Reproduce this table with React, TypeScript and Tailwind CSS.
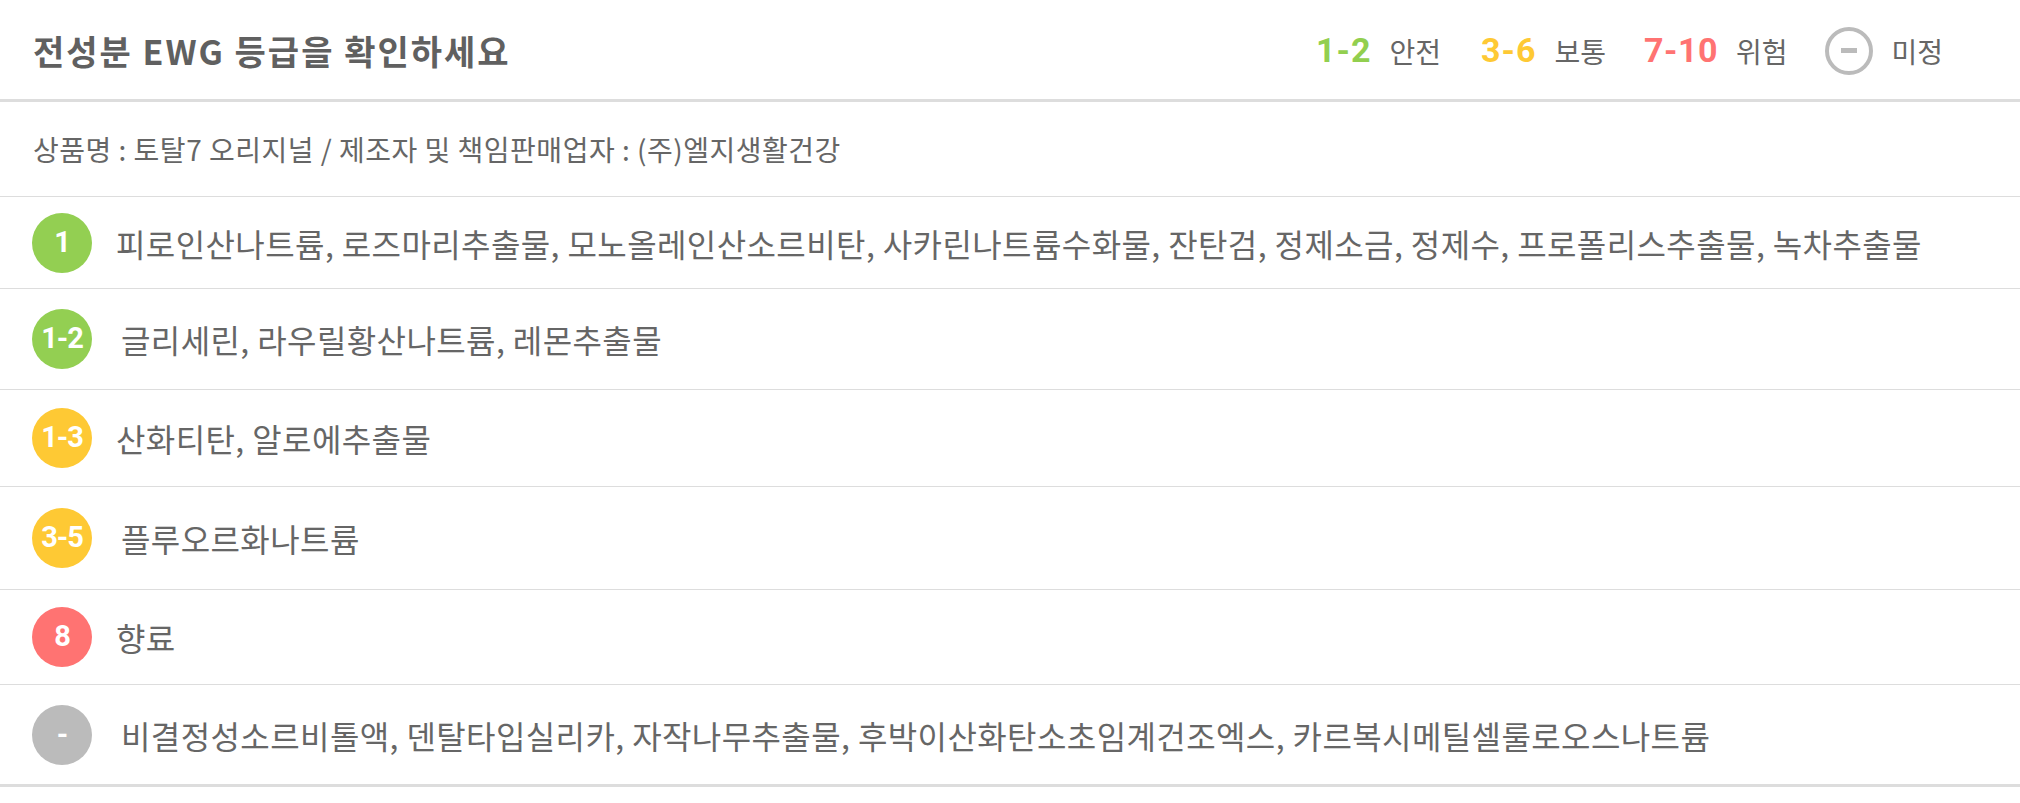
const KR = "font-['Noto_Sans_CJK_KR',sans-serif]";
const NUM = "font-['Roboto','Noto_Sans_CJK_KR',sans-serif]";

type Row = {
  grade: string;
  color: string;
  text: string;
  height: string;
  indent: string;
  last?: boolean;
};

const rows: Row[] = [
  {
    grade: '1',
    color: 'bg-[#93cf52]',
    text: '피로인산나트륨, 로즈마리추출물, 모노올레인산소르비탄, 사카린나트륨수화물, 잔탄검, 정제소금, 정제수, 프로폴리스추출물, 녹차추출물',
    height: 'h-[92px]',
    indent: 'ml-[24px]',
  },
  {
    grade: '1-2',
    color: 'bg-[#93cf52]',
    text: '글리세린, 라우릴황산나트륨, 레몬추출물',
    height: 'h-[101px]',
    indent: 'ml-[29px]',
  },
  {
    grade: '1-3',
    color: 'bg-[#fec934]',
    text: '산화티탄, 알로에추출물',
    height: 'h-[97px]',
    indent: 'ml-[24px]',
  },
  {
    grade: '3-5',
    color: 'bg-[#fec934]',
    text: '플루오르화나트륨',
    height: 'h-[103px]',
    indent: 'ml-[29px]',
  },
  {
    grade: '8',
    color: 'bg-[#ff7372]',
    text: '향료',
    height: 'h-[95px]',
    indent: 'ml-[24px]',
  },
  {
    grade: '-',
    color: 'bg-[#bbbbbb]',
    text: '비결정성소르비톨액, 덴탈타입실리카, 자작나무추출물, 후박이산화탄소초임계건조엑스, 카르복시메틸셀룰로오스나트륨',
    height: 'h-[102px]',
    indent: 'ml-[29px]',
    last: true,
  },
];

function GradeBadge({ grade, color }: { grade: string; color: string }) {
  return (
    <div
      className={`flex h-[60px] w-[60px] shrink-0 items-center justify-center rounded-full ${color} ${NUM} text-[29px] font-bold tracking-[-1px] text-white`}
    >
      {grade}
    </div>
  );
}

function Legend() {
  return (
    <div className="flex items-center">
      <span className={`${NUM} text-[34px] font-bold tracking-[1px] text-[#92cf4f]`}>1-2</span>
      <span className={`${KR} ml-[18px] text-[28px] text-[#666]`}>안전</span>
      <span className={`${NUM} ml-[40px] text-[34px] font-bold tracking-[1px] text-[#fec934]`}>3-6</span>
      <span className={`${KR} ml-[18px] text-[28px] text-[#666]`}>보통</span>
      <span className={`${NUM} ml-[38px] text-[34px] font-bold tracking-[0.5px] text-[#ff7372]`}>7-10</span>
      <span className={`${KR} ml-[18px] text-[28px] text-[#666]`}>위험</span>
      <div className="ml-[38px] flex h-[48px] w-[48px] items-center justify-center rounded-full border-[4px] border-[#bbb]">
        <div className="h-[5px] w-[16px] bg-[#bbb]" />
      </div>
      <span className={`${KR} ml-[18px] text-[28px] text-[#666]`}>미정</span>
    </div>
  );
}

export default function App() {
  return (
    <div className={`w-full bg-white ${KR}`}>
      <div className="flex h-[102px] items-center justify-between border-b-[3px] border-[#dddddd] pl-[33px] pr-[77px] pt-[2px]">
        <h1 className="text-[34px] font-bold tracking-[2px] text-[#606060]">전성분 EWG 등급을 확인하세요</h1>
        <Legend />
      </div>
      <div className="flex h-[95px] items-center border-b border-[#dddddd] pl-[33px]">
        <p className="text-[28px] tracking-[0.5px] text-[#666]">
          상품명 : 토탈7 오리지널 / 제조자 및 책임판매업자 : (주)엘지생활건강
        </p>
      </div>
      {rows.map((row) => (
        <div
          key={row.grade}
          className={`flex items-center pl-[32px] ${row.height} ${
            row.last ? 'border-b-[3px]' : 'border-b'
          } border-[#dddddd]`}
        >
          <GradeBadge grade={row.grade} color={row.color} />
          <p className={`${row.indent} text-[32px] tracking-[0.4px] text-[#666]`}>{row.text}</p>
        </div>
      ))}
    </div>
  );
}
